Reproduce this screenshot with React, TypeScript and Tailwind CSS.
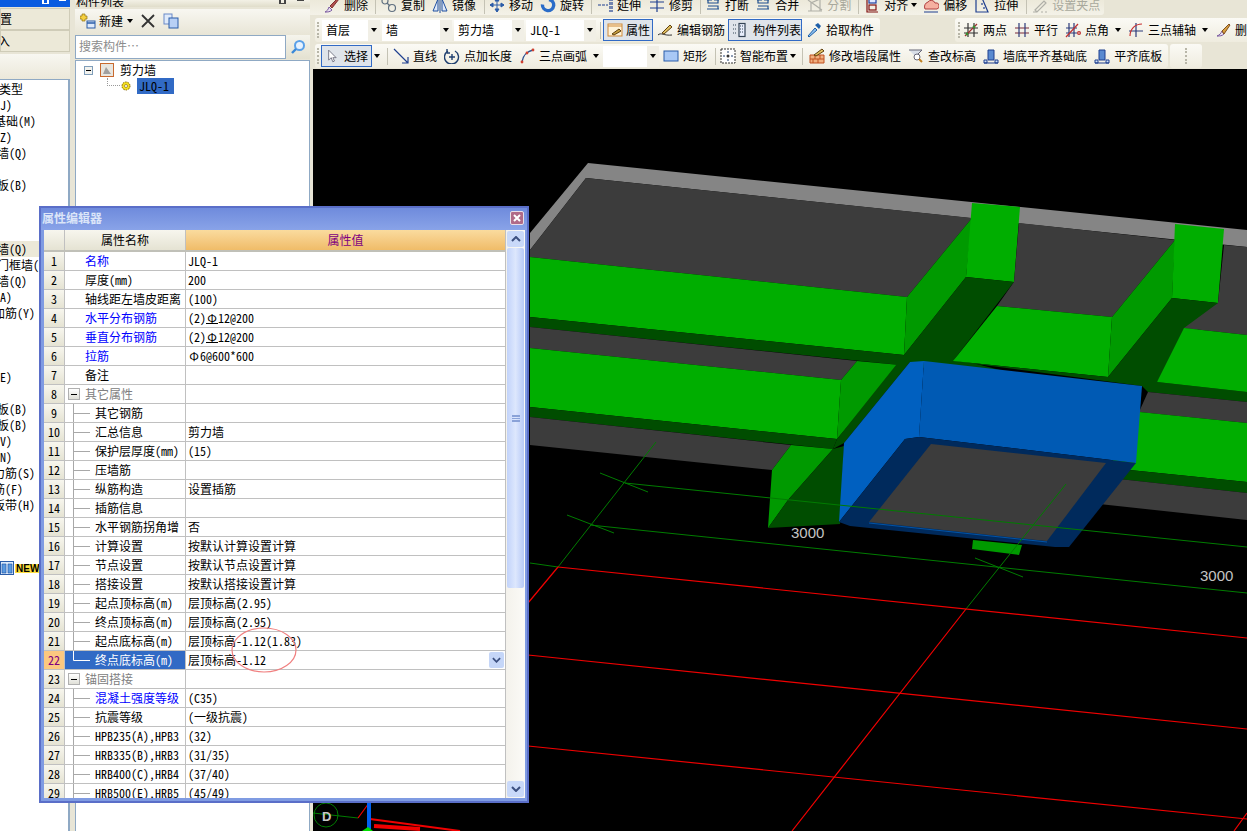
import type { ReactNode } from "react";
import clsx from "clsx";

const s = { fill: "none", strokeWidth: 1.2 };

const icons: Record<string, ReactNode> = {
  brush: <g><path d="M1 15c2-1 3-2 4-5l3 3c-2 2-4 2-7 2z" fill="#e8e0f0" stroke="#7a5aa0" /><path d="M6 9l8-8 1 1-7 9z" fill="#b05050" stroke="#803030" /></g>,
  copy: <g {...s} stroke="#607080"><circle cx="4" cy="4" r="3" /><circle cx="11" cy="11" r="3.5" /><path d="M6 6l3 3" /></g>,
  mirror: <g stroke="#1f4f9f" fill="#dfe9f8"><path d="M1 14L6 2v12zM15 14L10 2v12z" /><path d="M8 0v16" /></g>,
  move: <path d="M8 1v14M1 8h14M8 1L6 4h4zM8 15l-2-3h4zM1 8l3-2v4zM15 8l-3-2v4z" stroke="#2a5ca8" fill="#2a5ca8" />,
  rotate: <g fill="none" stroke="#2a6cc8" strokeWidth="3.4"><path d="M9 2.5a5.6 5.6 0 1 1-6.5 5" /></g>,
  extend: <g stroke="#1f3f8f" {...s}><path d="M13 1v14M15 1v14M1 8h10" strokeDasharray="3 1" /></g>,
  trim: <g stroke="#1f3f8f" {...s}><path d="M8 1v14M1 5h14M1 11h14" /></g>,
  brk: <g stroke="#1f4f8f" {...s}><path d="M2 3h5M9 3h5M2 12h12M3 3v3h10V3M3 9h10v3" /></g>,
  split: <g stroke="#b0b0a8" {...s}><path d="M1 14h14M4 14V6l9-4v12M1 3l14 10" /></g>,
  align: <g {...s}><path d="M3 0v15h11" stroke="#801010" /><rect x="5" y="2" width="7" height="4" stroke="#1f3f9f" fill="#dfe8ff" /><rect x="5" y="8" width="7" height="5" stroke="#801010" /></g>,
  offset: <g stroke="#b04040" fill="#f5b0a0"><path d="M2 12a5 5 0 0 1 3-7 4 4 0 0 1 7 1 3 3 0 0 1 2 6z" /><path d="M1 15h14" stroke="#1f3f8f" /></g>,
  stretch: <g {...s} stroke="#1f3f8f"><path d="M2 15V1h6l6 14zM8 6v2M10 10v2" /></g>,
  grip: <g stroke="#b0b0a8" {...s}><path d="M3 13l9-9 2 2-9 9zM1 15h4" /><path d="M9 15h2M13 15h2" /></g>,
  prop: <g><rect x="1" y="2" width="14" height="12" fill="#fff3d8" stroke="#d08a3a" /><path d="M1 4h14" stroke="#d08a3a" /><path d="M5 12l7-5 2 2-7 4z" fill="#c8a040" stroke="#604010" /></g>,
  edit: <g><path d="M1 13c3-3 6 1 14 0" fill="none" stroke="#333" /><path d="M5 11l8-8 2 2-8 7z" fill="#e0c060" stroke="#604010" /></g>,
  list: <g stroke="#345" {...s}><rect x="8" y="1.5" width="6" height="13" fill="#e8eefc" /><path d="M9 4h4M9 7h4M9 10h4M2 3h3M2 7h3M2 11h3" strokeDasharray="1 1" /></g>,
  pick: <g><path d="M2 14l7-8 2 2-8 7z" fill="#8cc0ee" stroke="#1f5fa8" /><path d="M9 3l3-2 3 3-2 3z" fill="#1f5fa8" /></g>,
  two: <g {...s}><path d="M1 6h14M1 11h14" stroke="#333" /><path d="M5 1v14M11 1v14" stroke="#333" /><path d="M2 14L14 2" stroke="#a03030" /><circle cx="4" cy="12" r="1.4" fill="#3a8a30" /><circle cx="11" cy="5" r="1.4" fill="#3a8a30" /></g>,
  par: <g stroke="#7a2a3a" {...s}><path d="M1 6h14M1 11h14" /><path d="M5 1v14M11 1v14" stroke="#2a3a7a" /></g>,
  angle: <g {...s}><path d="M1 6h11M1 11h11M4 1v14M9 1v14" stroke="#2a3a7a" /><path d="M1 15L13 2" stroke="#c03030" /><circle cx="14" cy="11" r="1.4" stroke="#c03030" /></g>,
  arc3: <g {...s}><path d="M8 1v14M1 9h14" stroke="#2a3a7a" /><path d="M2 14C2 7 7 2 14 2" stroke="#c83030" /></g>,
  del: <g><path d="M2 14c3-1 4-3 5-5l2 3c-2 2-4 2-7 2z" fill="#e8e0f0" stroke="#7a5aa0" /><path d="M7 9l7-7 1 1-6 9z" fill="#d8a040" stroke="#805020" /></g>,
  arrow: <g {...s} stroke="#1f3f8f"><path d="M1 1l14 14M15 9v6H9" /></g>,
  len: <g fill="none" stroke="#1f3f6f" strokeWidth="1.4"><path d="M4 3a7 7 0 1 0 7 0" /><path d="M8 6v6M5 9h6M3 1v4h3" /></g>,
  arc: <g fill="none"><path d="M3 14C4 7 9 3 14 2" stroke="#2a4f8f" strokeWidth="1.4" /><circle cx="3" cy="14" r="1.4" fill="#d04030" /><circle cx="8" cy="5" r="1.4" fill="#d04030" /><circle cx="14" cy="2" r="1.4" fill="#d04030" /></g>,
  rect: <rect x="1" y="3" width="14" height="10" fill="#a8c8f5" stroke="#2a5ca8" />,
  smart: <g><rect x="1" y="1" width="14" height="14" fill="#fff" stroke="#333" strokeDasharray="2 1" /><path d="M8 3v10M3 8h10" stroke="#1f3f6f" strokeDasharray="2 2" /><circle cx="8" cy="8" r="1.5" fill="#333" /></g>,
  wall: <g><path d="M1 7h14v8H1z" fill="#f0b080" stroke="#c05020" /><path d="M1 11h14M6 7v4M11 7v4M4 11v4M9 11v4" stroke="#c05020" /><path d="M5 7l8-6 2 2-8 5z" fill="#e0c060" stroke="#604010" /></g>,
  elev: <g><path d="M1 2h13L9 7v3" fill="#d8dee8" stroke="#667" /><circle cx="9" cy="9" r="3" fill="#fff" stroke="#667" /><path d="M11 11l3 3" stroke="#c08020" strokeWidth="2" /></g>,
  base: <g stroke="#1f3f8f" fill="#5a8ad0"><path d="M5 2h6v10H5z" /><path d="M1 15v-3h3v3zM12 15v-3h3v3z" fill="#cfe0f5" /><path d="M1 15h14" /></g>,
};

function Icon({ name, size = 16 }: { name: string; size?: number }) {
  return (
    <svg viewBox="0 0 16 16" width={size} height={size} className="shrink-0">
      {icons[name]}
    </svg>
  );
}

function Tool({ icon, label, gray, className }: { icon: string; label: string; gray?: boolean; className?: string }) {
  return (
    <div className={clsx("flex shrink-0 items-center gap-1 whitespace-nowrap", gray && "text-[#a8a89c]", className)}>
      <Icon name={icon} />
      {label}
    </div>
  );
}

function Caret({ className }: { className?: string }) {
  return <span className={clsx("h-0 w-0 shrink-0 border-x-[3px] border-t-[4px] border-x-transparent border-t-black", className)} />;
}

function Sep({ className }: { className?: string }) {
  return <span className={clsx("h-[17px] w-px shrink-0 bg-[#c4c2b4]", className)} />;
}

function Grip({ className }: { className?: string }) {
  return <span className={clsx("h-[16px] w-[2px] shrink-0 border-l-2 border-dotted border-[#b8b6a8]", className)} />;
}

function Combo({ label, className }: { label?: string; className?: string }) {
  return (
    <div className={clsx("flex h-[21px] shrink-0 items-center bg-white pl-1", className)}>
      <span className="flex-1 whitespace-nowrap">{label}</span>
      <span className="flex h-full w-[12px] items-center justify-center bg-[#f1efe6]">
        <Caret />
      </span>
    </div>
  );
}

const navRows: { text?: string; cls?: string; hi?: boolean }[] = [
  { text: "类型", cls: "-ml-px" }, { text: "(J)", cls: "-ml-[6px]" }, { text: "基础(M)", cls: "-ml-[6px]" },
  { text: "(Z)", cls: "-ml-[6px]" }, { text: "墙(Q)", cls: "-ml-[3px]" }, {}, { text: "板(B)", cls: "-ml-[3px]" },
  {}, {}, {}, { text: "墙(Q)", cls: "-ml-[3px]", hi: true }, { text: "门框墙(Q)", cls: "-ml-[3px]" },
  { text: "墙(Q)", cls: "-ml-[3px]" }, { text: "(A)", cls: "-ml-[6px]" }, { text: "加筋(Y)", cls: "-ml-[7px]" },
  {}, {}, {}, { text: "(E)", cls: "-ml-[6px]" }, {}, { text: "板(B)", cls: "-ml-[3px]" }, { text: "板(B)", cls: "-ml-[3px]" },
  { text: "(V)", cls: "-ml-[6px]" }, { text: "(N)", cls: "-ml-[6px]" }, { text: "力筋(S)", cls: "-ml-[7px]" },
  { text: "筋(F)", cls: "-ml-[7px]" }, { text: "板带(H)", cls: "-ml-[7px]" },
];

function LeftPanel() {
  return (
    <div className="flex w-[70px] shrink-0 flex-col">
      <div className="flex h-[7px] items-start justify-end gap-[10px] overflow-hidden bg-[#0a5ce0] pr-[4px]">
        <span className="h-[4px] w-[7px] border-x-2 border-b border-white" />
        <span className="h-[4px] w-[7px] border-t border-white" />
      </div>
      <div className="mt-px flex h-[22px] items-center overflow-hidden border border-[#cfccb8] bg-[#ece9d8]"><span className="-ml-px">置</span></div>
      <div className="flex h-[22px] items-center overflow-hidden border border-[#cfccb8] bg-[#ece9d8]"><span className="-ml-[3px]">入</span></div>
      <div className="mt-[2px] h-[25px] bg-gradient-to-b from-[#f8f7f1] to-[#ebe8da]" />
      <div className="flex-1 overflow-hidden border-t border-r-2 border-[#8fa9c4] bg-white pt-px">
        {navRows.map((r, i) => (
          <div key={i} className={clsx("h-4 w-[39px] whitespace-nowrap leading-4", r.hi && "bg-[#ece9d8]")}>
            {r.text && <div className={r.cls}>{r.text}</div>}
          </div>
        ))}
        <div className="mt-[47px] flex h-4 items-center gap-[1px]">
          <svg viewBox="0 0 14 14" width={14} height={14} className="shrink-0">
            <rect x="0.5" y="0.5" width="13" height="13" fill="#d8e8fb" stroke="#2a5ca8" />
            <path d="M2 3h4v9H2zM8 3h4v9H8z" fill="#5a9ae0" stroke="#1f4f9f" strokeWidth="0.6" />
          </svg>
          <span className="bg-[#ffe040] px-px font-['Liberation_Sans',sans-serif] text-[10px] leading-[9px] font-bold">NEW</span>
        </div>
      </div>
    </div>
  );
}

function ComponentPanel() {
  return (
    <div className="ml-[5px] flex w-[235px] shrink-0 flex-col">
      <div className="flex h-[7px] justify-between overflow-hidden bg-gradient-to-b from-[#f3f1e6] to-[#e0ddca] pr-[6px] pl-px">
        <span className="-mt-[6px] whitespace-nowrap">构件列表</span>
        <span className="flex items-start gap-[11px]">
          <span className="h-[4px] w-[7px] border-x-2 border-b border-[#444]" />
          <span className="h-[4px] w-[7px] border-t border-[#444]" />
        </span>
      </div>
      <div className="mt-[2px] flex h-[26px] items-center bg-gradient-to-b from-[#f8f7f1] to-[#e8e5d6] pb-[3px] pl-[5px]">
        <svg viewBox="0 0 16 16" width={16} height={16}>
          <path d="M2 1h3v2h2v3H5v2H2V6H0V3h2z" fill="#f5d040" stroke="#907010" strokeWidth="0.7" />
          <rect x="7" y="8" width="8" height="7" fill="#dfeafa" stroke="#2a5ca8" />
          <path d="M7 10h8" stroke="#2a5ca8" strokeWidth="1.5" />
        </svg>
        <span className="ml-[3px]">新建</span>
        <Caret className="ml-[4px]" />
        <svg viewBox="0 0 14 14" width={14} height={14} className="ml-[8px]">
          <path d="M1 1l12 12M13 1L1 13" stroke="#333" strokeWidth="1.8" />
        </svg>
        <svg viewBox="0 0 16 16" width={16} height={16} className="ml-[8px]">
          <rect x="1" y="1" width="8" height="10" fill="#dfeafa" stroke="#6a8ac8" />
          <rect x="6" y="5" width="9" height="10" fill="#b8d0f5" stroke="#2a5ca8" />
        </svg>
      </div>
      <div className="flex h-[25px] bg-[#e8e5d6] pb-px">
        <div className="flex flex-1 items-center border border-[#8fa9c4] bg-white pb-[3px] pl-[3px] text-[#8c8c8c]">搜索构件…</div>
        <div className="flex w-[24px] items-center justify-center bg-gradient-to-b from-[#f5f4ec] to-[#e4e1d0]">
          <svg viewBox="0 0 16 16" width={16} height={16}>
            <circle cx="9.5" cy="6.5" r="4.5" fill="#e6f2ff" stroke="#5aa0e8" strokeWidth="2" />
            <path d="M6 10l-4 4" stroke="#3a88d8" strokeWidth="2.4" />
          </svg>
        </div>
      </div>
      <div className="flex-1 border-x border-t border-[#8fa9c4] bg-white pt-px pl-[8px]">
        <div className="flex h-4 items-center">
          <span className="flex size-[9px] items-center justify-center border border-[#7f9db9] bg-[#f2f2ee]">
            <span className="h-px w-[5px] bg-black" />
          </span>
          <svg viewBox="0 0 14 14" width={14} height={14} className="ml-[7px]">
            <rect x="0.5" y="0.5" width="13" height="13" fill="#e8e6e0" stroke="#c86a30" />
            <path d="M3 11l3-7 5 7z" fill="#a0a0a0" />
          </svg>
          <span className="ml-[6px]">剪力墙</span>
        </div>
        <div className="flex h-4 items-center pl-[23px]">
          <span className="-mt-[8px] h-[8px] w-[13px] border-b border-l border-dotted border-[#999]" />
          <svg viewBox="0 0 10 10" width={10} height={10} className="ml-px">
            <circle cx="5" cy="5" r="4" fill="#f5e020" stroke="#806000" strokeDasharray="1.5 1" />
            <circle cx="5" cy="5" r="1.5" fill="#fff" stroke="#806000" strokeWidth="0.6" />
          </svg>
          <span className="ml-[6px] w-[37px] bg-[#316ac5] pl-[2px] leading-4">JLQ-1</span>
        </div>
      </div>
    </div>
  );
}

function Toolbars() {
  return (
    <div className="flex h-[69px] shrink-0 flex-col overflow-hidden bg-[#e8e5d6]">
      <div className="h-[15px] w-[794px] overflow-hidden rounded-br-[3px] bg-gradient-to-b from-[#ece9da] to-[#f4f2e8]">
        <div className="-mt-[3px] flex h-4 items-center pl-[14px]">
          <Tool icon="brush" label="删除" />
          <Sep className="ml-[7px]" />
          <Tool icon="copy" label="复制" className="ml-[5px]" />
          <Tool icon="mirror" label="镜像" className="ml-[7px]" />
          <Sep className="ml-[8px]" />
          <Tool icon="move" label="移动" className="ml-[4px]" />
          <Tool icon="rotate" label="旋转" className="ml-[7px]" />
          <Sep className="ml-[7px]" />
          <Tool icon="extend" label="延伸" className="ml-[5px]" />
          <Tool icon="trim" label="修剪" className="ml-[8px]" />
          <Sep className="ml-[7px]" />
          <Tool icon="brk" label="打断" className="ml-[4px]" />
          <Tool icon="brk" label="合并" className="ml-[6px]" />
          <Tool icon="split" label="分割" gray className="ml-[8px]" />
          <Sep className="ml-[7px]" />
          <Tool icon="align" label="对齐" className="ml-[5px]" />
          <Caret className="ml-[3px]" />
          <Tool icon="offset" label="偏移" className="ml-[6px]" />
          <Tool icon="stretch" label="拉伸" className="ml-[7px]" />
          <Sep className="ml-[8px]" />
          <Tool icon="grip" label="设置夹点" gray className="ml-[5px]" />
        </div>
      </div>
      <div className="mt-[3px] flex h-[24px]">
        <div className="ml-[5px] flex w-[565px] shrink-0 items-center rounded-[3px] bg-gradient-to-b from-[#fbfaf5] to-[#efecdf]">
          <Grip className="ml-[2px]" />
          <Combo label="首层" className="ml-[3px] w-[58px]" />
          <Combo label="墙" className="ml-[2px] w-[70px]" />
          <Combo label="剪力墙" className="ml-[2px] w-[70px]" />
          <Combo label="JLQ-1" className="ml-[2px] w-[70px]" />
          <Sep className="ml-[4px]" />
          <div className="ml-[2px] flex h-[22px] w-[50px] shrink-0 items-center gap-[3px] border border-[#316ac5] bg-[#dfe4ea] pl-[3px]">
            <Icon name="prop" />
            属性
          </div>
          <Tool icon="edit" label="编辑钢筋" className="ml-[4px]" />
          <div className="ml-[3px] flex h-[22px] w-[74px] shrink-0 items-center gap-[6px] border border-[#316ac5] bg-[#dfe4ea] pl-[2px] whitespace-nowrap">
            <Icon name="list" />
            构件列表
          </div>
          <Tool icon="pick" label="拾取构件" className="ml-[4px]" />
        </div>
        <div className="ml-[75px] flex flex-1 items-center overflow-hidden rounded-l-[3px] bg-gradient-to-b from-[#fbfaf5] to-[#efecdf]">
          <Grip className="ml-[3px]" />
          <Tool icon="two" label="两点" className="ml-[3px]" />
          <Tool icon="par" label="平行" className="ml-[7px]" />
          <Tool icon="angle" label="点角" className="ml-[7px]" />
          <Caret className="ml-[6px]" />
          <Tool icon="arc3" label="三点辅轴" className="ml-[7px]" />
          <Caret className="ml-[6px]" />
          <Tool icon="del" label="删除" className="ml-[7px]" />
        </div>
      </div>
      <div className="mt-[2px] flex h-[24px]">
        <div className="ml-[5px] flex w-[853px] shrink-0 items-center rounded-[3px] bg-gradient-to-b from-[#fbfaf5] to-[#efecdf]">
          <Grip className="ml-[2px]" />
          <div className="ml-[2px] flex h-[22px] w-[51px] shrink-0 items-center border border-[#316ac5] bg-[#dfe4ea] pl-[5px]">
            <svg viewBox="0 0 12 16" width={10} height={14}>
              <path d="M2 1v12l3-3 2 5 2-1-2-4h4z" fill="#fff" stroke="#667" />
            </svg>
            <span className="ml-[7px]">选择</span>
          </div>
          <Caret className="ml-[2px]" />
          <Sep className="ml-[7px]" />
          <Tool icon="arrow" label="直线" className="ml-[5px]" />
          <Tool icon="len" label="点加长度" className="ml-[7px]" />
          <Tool icon="arc" label="三点画弧" className="ml-[7px]" />
          <Caret className="ml-[6px]" />
          <Combo className="ml-[4px] w-[56px]" />
          <Tool icon="rect" label="矩形" className="ml-[4px]" />
          <Sep className="ml-[8px]" />
          <Tool icon="smart" label="智能布置" className="ml-[4px]" />
          <Caret className="ml-[2px]" />
          <Sep className="ml-[6px]" />
          <Tool icon="wall" label="修改墙段属性" className="ml-[6px]" />
          <Tool icon="elev" label="查改标高" className="ml-[7px]" />
          <Tool icon="base" label="墙底平齐基础底" className="ml-[7px]" />
          <Tool icon="base" label="平齐底板" className="ml-[7px]" />
        </div>
        <div className="ml-[2px] flex w-[32px] items-center justify-center rounded-[3px] bg-gradient-to-b from-[#fbfaf5] to-[#efecdf]">
          <Grip />
        </div>
      </div>
    </div>
  );
}

const G = "#00ae00", GM = "#009a00", GD = "#004d00", K = "#3c3c3c", L = "#858585";
const polys: [string, string][] = [
  [L, "588,163 1247,230 1247,247 586,178 530,250 530,233"],
  [K, "586,178 972,218 907,297 530,257 530,250"],
  [G, "530,257 907,297 904,355 530,317"],
  [GD, "530,317 904,355 900,365 530,327"],
  [K, "530,327 857,361 841,380 530,348"],
  [G, "530,348 841,380 837,439 530,407"],
  [GD, "530,407 837,439 833,449 530,417"],
  [K, "530,417 791,445 772,470 530,445"],
  [GM, "972,218 966,277 904,355 907,297"],
  [GM, "857,361 900,365 837,439 841,380"],
  [G, "972,203 1020,207 1014,282 966,277"],
  [GD, "966,277 1014,282 953,361 910,362 844,443 833,449 837,439 904,355"],
  [GD, "905,358 953,358 1000,370 924,368"],
  [K, "1019,223 1175,240 1112,317 997,306 1014,282"],
  [G, "997,306 1112,317 1108,377 953,361"],
  [GM, "1175,240 1172,298 1108,377 1112,317"],
  [G, "1175,224 1224,229 1218,303 1172,298"],
  [GD, "1172,298 1218,303 1157,382 1247,392 1247,402 1148,392 1142,386 953,361 1108,377"],
  [K, "1224,245 1247,247 1247,335 1184,328 1218,303"],
  [G, "1184,328 1247,335 1247,392 1157,382"],
  [K, "1148,392 1247,402 1247,423 1139,412"],
  [G, "1130,411 1247,423 1247,482 1110,468"],
  [GD, "1110,468 1247,482 1247,493 1110,478"],
  [K, "1110,478 1247,493 1247,520 1090,503"],
  [GM, "973,540 1022,545 1019,555 972,549"],
  [GM, "791,445 833,449 788,500 768,528 772,470"],
  [GD, "833,449 844,446 840,524 768,528 788,500"],
  ["#005ab4", "924,361 1142,386 1136,463 919,437"],
  ["#0060c0", "910,362 924,361 919,437 905,439 839,522 844,443"],
  ["#002a5c", "905,439 919,437 1136,463 1069,547 1055,547 850,526 839,522"],
  [K, "931,444 1106,463 1047,541 869,522"],
];

function Scene() {
  return (
    <svg viewBox="313 69 934 762" width={934} height={762} className="block">
      <text x="791" y="538" fill="#c4c4c4" fontSize="15" fontFamily="Liberation Sans, sans-serif">3000</text>
      <text x="1200" y="581" fill="#c4c4c4" fontSize="15" fontFamily="Liberation Sans, sans-serif">3000</text>
      {polys.map(([fill, points], i) => (
        <polygon key={i} fill={fill} points={points} />
      ))}
      <path d="M869 523L1047 542" stroke="#0054a8" strokeWidth="1" />
      <g stroke="#007c00" strokeWidth="1" fill="none">
        <path d="M625 483L1247 547M590 525L1247 593M530 563L558 567" />
        <path d="M656 442L558 567M1066 484L966 609" />
        <path d="M600 473L648 492M567 515L614 533M975 558L1023 577" />
        <circle cx="326" cy="815" r="12" />
        <path d="M313 813L358 818" />
      </g>
      <g stroke="#f00000" strokeWidth="1.2" fill="none">
        <path d="M558 567L1247 638M528 655L1247 729M528 746L1247 819" />
        <path d="M558 567L528 603M966 609L792 831M1247 813L1234 831M358 818L369 803" />
        <path d="M370 819L460 831" strokeWidth="2" />
        <path d="M374 826L420 829" strokeWidth="4" />
      </g>
      <path d="M369 803V829" stroke="#0060f0" strokeWidth="4" />
      <path d="M362 831l6-4 5 4z" fill="#00e000" />
      <text x="322" y="821" fill="#c8c8c8" fontSize="13" fontFamily="Liberation Sans, sans-serif" fontWeight="700">D</text>
    </svg>
  );
}

type Row = { name: string; value?: ReactNode; blue?: boolean; child?: boolean; group?: boolean; sel?: boolean; last?: boolean };

const bar = <span className="inline-block w-3 border-b border-black text-center leading-[11px]">Φ</span>;
const rows: Row[] = [
  { name: "名称", value: "JLQ-1", blue: true },
  { name: "厚度(mm)", value: "200" },
  { name: "轴线距左墙皮距离", value: "(100)" },
  { name: "水平分布钢筋", value: <>(2){bar}12@200</>, blue: true },
  { name: "垂直分布钢筋", value: <>(2){bar}12@200</>, blue: true },
  { name: "拉筋", value: <><span className="inline-block w-3 text-center">Φ</span>6@600*600</>, blue: true },
  { name: "备注" },
  { name: "其它属性", group: true },
  { name: "其它钢筋", child: true },
  { name: "汇总信息", value: "剪力墙", child: true },
  { name: "保护层厚度(mm)", value: "(15)", child: true },
  { name: "压墙筋", child: true },
  { name: "纵筋构造", value: "设置插筋", child: true },
  { name: "插筋信息", child: true },
  { name: "水平钢筋拐角增", value: "否", child: true },
  { name: "计算设置", value: "按默认计算设置计算", child: true },
  { name: "节点设置", value: "按默认节点设置计算", child: true },
  { name: "搭接设置", value: "按默认搭接设置计算", child: true },
  { name: "起点顶标高(m)", value: "层顶标高(2.95)", child: true },
  { name: "终点顶标高(m)", value: "层顶标高(2.95)", child: true },
  { name: "起点底标高(m)", value: "层顶标高-1.12(1.83)", child: true },
  { name: "终点底标高(m)", value: "层顶标高-1.12", child: true, sel: true, last: true },
  { name: "锚固搭接", group: true },
  { name: "混凝土强度等级", value: "(C35)", child: true, blue: true },
  { name: "抗震等级", value: "(一级抗震)", child: true },
  { name: "HPB235(A),HPB3", value: "(32)", child: true },
  { name: "HRB335(B),HRB3", value: "(31/35)", child: true },
  { name: "HRB400(C),HRB4", value: "(37/40)", child: true },
  { name: "HRB500(E),HRB5", value: "(45/49)", child: true },
];

function Chevron({ up, small }: { up?: boolean; small?: boolean }) {
  return (
    <svg viewBox="0 0 10 6" width={small ? 9 : 10} height={6}>
      <path d={up ? "M1 5l4-4 4 4" : "M1 1l4 4 4-4"} fill="none" stroke="#3c5080" strokeWidth="2" />
    </svg>
  );
}

function PropertyRow({ row, n }: { row: Row; n: number }) {
  const line = row.sel ? "#ffffff" : "#a8a8a8";
  return (
    <div className="flex h-[19px] shrink-0 border-b border-[#c0c0c0]">
      <div className={clsx("flex w-[21px] shrink-0 items-center justify-center border-r border-[#c0c0c0]", row.sel ? "bg-[#fcc880] text-[#800080]" : "bg-gradient-to-b from-[#f7f6ee] to-[#e5e3d3]")}>
        {n}
      </div>
      <div className={clsx("flex w-[121px] shrink-0 items-center overflow-hidden border-r border-[#c0c0c0] whitespace-nowrap", row.sel && "bg-[#316ac5] text-white", row.blue && "text-[#0000ff]", row.group && "text-[#808080]")}>
        {row.child && (
          <svg viewBox="0 0 30 19" width={30} height={19} className="shrink-0">
            <path d={row.last ? "M8.5 0V9.5H25" : "M8.5 0V19M8.5 9.5H25"} stroke={line} fill="none" />
          </svg>
        )}
        {row.group && (
          <span className="mr-[5px] ml-[3px] flex size-[12px] shrink-0 items-center justify-center border border-[#b0b0b0] bg-gradient-to-b from-white to-[#e0e0d8]">
            <span className="h-px w-[6px] bg-black" />
          </span>
        )}
        {!row.child && !row.group && <span className="w-[20px] shrink-0" />}
        {row.name}
      </div>
      <div className="flex flex-1 items-center pl-[2px] whitespace-nowrap">
        <span className="flex-1">{row.value}</span>
        {row.sel && (
          <span className="mr-px flex h-[16px] w-[15px] items-center justify-center rounded-[2px] bg-[#c5d6f8]">
            <Chevron small />
          </span>
        )}
      </div>
    </div>
  );
}

function PropertyDialog() {
  return (
    <div className="absolute top-[206px] left-[39px] z-10 flex h-[597px] w-[490px] flex-col border-[2px] border-[#5a6ec8] bg-[#7f9be2]">
      <div className="flex h-[22px] shrink-0 items-center justify-between bg-gradient-to-b from-[#6f8bdc] to-[#89a3e8] pr-[3px] pb-[2px] pl-[1px]">
        <span className="font-bold text-[#dbe5f8]">属性编辑器</span>
        <span className="flex size-[14px] items-center justify-center rounded-[2px] border border-[#e8dfe8] bg-[#b06a88]">
          <svg viewBox="0 0 8 8" width={8} height={8}>
            <path d="M1 1l6 6M7 1L1 7" stroke="#fff" strokeWidth="2" />
          </svg>
        </span>
      </div>
      <div className="mr-[2px] ml-[3px] flex min-h-0 flex-1 bg-white">
        <div className="flex w-[462px] shrink-0 flex-col overflow-hidden border-r border-[#c0c0c0]">
          <div className="flex h-[22px] shrink-0 border-b-2 border-[#c0c0b8]">
            <div className="w-[21px] shrink-0 border-r border-[#c0c0c0] bg-gradient-to-b from-[#f7f6ee] to-[#e5e3d3]" />
            <div className="flex w-[121px] shrink-0 items-center justify-center border-r border-[#c0c0c0] bg-gradient-to-b from-[#f7f6ee] to-[#e5e3d3]">属性名称</div>
            <div className="flex flex-1 items-center justify-center bg-gradient-to-b from-[#fadb9e] to-[#f0bc68] text-[#800080]">属性值</div>
          </div>
          {rows.map((r, i) => (
            <PropertyRow key={i} row={r} n={i + 1} />
          ))}
        </div>
        <div className="flex flex-1 flex-col items-center bg-gradient-to-r from-[#f4f2ec] to-[#fbfaf7] px-px py-px">
          <span className="flex h-[16px] w-full shrink-0 items-center justify-center rounded-[2px] bg-[#c9d9f9]">
            <Chevron up />
          </span>
          <span className="mt-[1px] flex h-[340px] w-full shrink-0 items-center justify-center rounded-[2px] bg-gradient-to-r from-[#c2d3fa] via-[#dde7fd] to-[#b8caf7]">
            <span className="h-[7px] w-[8px] border-y border-[#8aa2d8] bg-[linear-gradient(#8aa2d8_1px,transparent_1px)] bg-[length:100%_2px]" />
          </span>
          <span className="mt-auto flex h-[16px] w-full shrink-0 items-center justify-center rounded-[2px] bg-[#c9d9f9]">
            <Chevron />
          </span>
        </div>
      </div>
      <div className="h-[3px] shrink-0" />
    </div>
  );
}

export default function App() {
  return (
    <div className="relative flex h-[831px] w-[1247px] overflow-hidden bg-[#e8e5d6] font-['Noto_Sans_CJK_SC',sans-serif] text-[12px] leading-4 text-black [font-feature-settings:'hwid']">
      <LeftPanel />
      <ComponentPanel />
      <div className="flex min-w-0 flex-1 flex-col">
        <Toolbars />
        <div className="ml-[3px] min-h-0 flex-1 bg-black">
          <Scene />
        </div>
      </div>
      <PropertyDialog />
      <svg viewBox="0 0 70 50" width={70} height={50} className="absolute top-[626px] left-[230px] z-20">
        <ellipse cx="34" cy="24" rx="32" ry="22" fill="none" stroke="#f08080" strokeWidth="1.2" />
      </svg>
    </div>
  );
}
